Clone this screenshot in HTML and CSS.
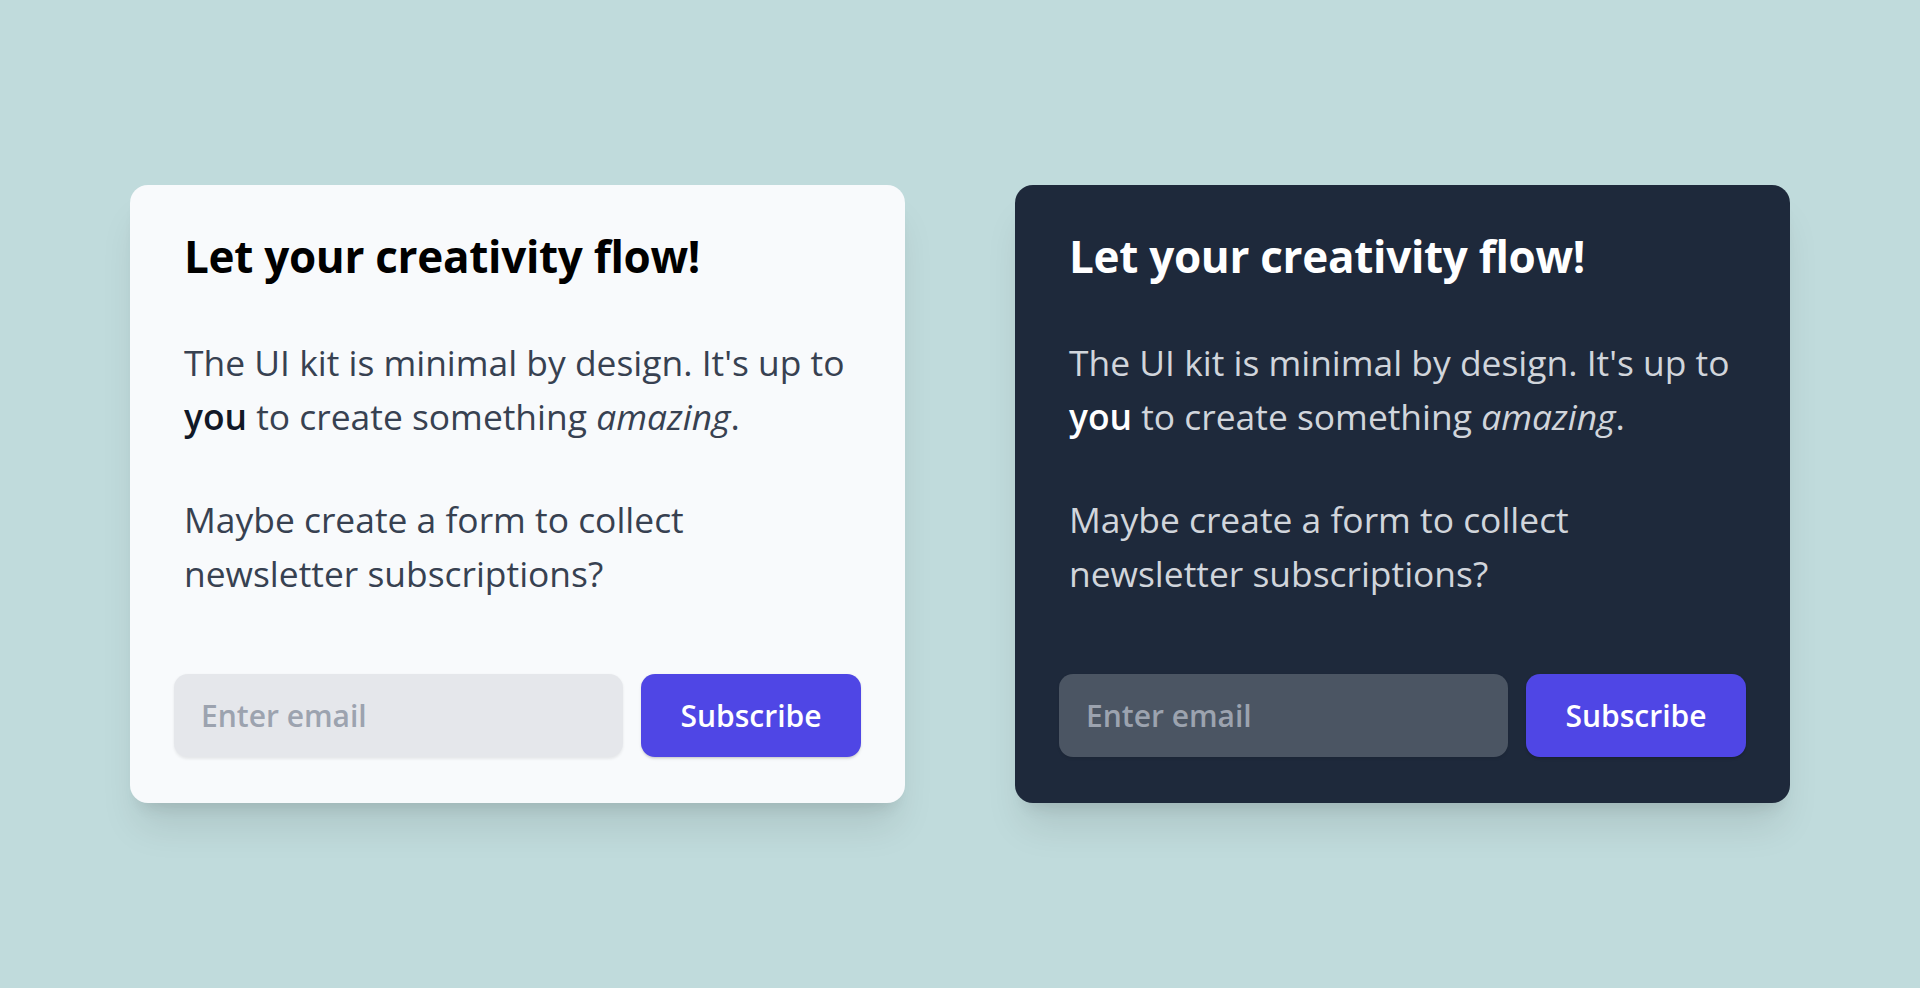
FILE: index.html
```html
<!DOCTYPE html>
<html lang="en">
<head>
<meta charset="utf-8">
<title>Let your creativity flow!</title>
<link rel="stylesheet" href="styles.css">
</head>
<body>
<main class="stage">
  <section class="card card--light">
    <div class="copy">
      <h2 class="title">Let your creativity flow!</h2>
      <p class="text">The UI kit is minimal by design. It's up to <strong>you</strong> to create something <em>amazing</em>.</p>
      <p class="text">Maybe create a form to collect<br>newsletter subscriptions?</p>
    </div>
    <form class="form">
      <input class="field" type="email" placeholder="Enter email">
      <button class="btn" type="button">Subscribe</button>
    </form>
  </section>
  <section class="card card--dark">
    <div class="copy">
      <h2 class="title">Let your creativity flow!</h2>
      <p class="text">The UI kit is minimal by design. It's up to <strong>you</strong> to create something <em>amazing</em>.</p>
      <p class="text">Maybe create a form to collect<br>newsletter subscriptions?</p>
    </div>
    <form class="form">
      <input class="field" type="email" placeholder="Enter email">
      <button class="btn" type="button">Subscribe</button>
    </form>
  </section>
</main>
</body>
</html>
```

FILE: styles.css
```css
* { box-sizing: border-box; }
html, body { margin: 0; padding: 0; }
body {
  background: #c0dbdc;
  font-family: "Open Sans", "Noto Sans", sans-serif;
  min-height: 988px;
}
.stage {
  min-height: 988px;
  display: flex;
  align-items: center;
  justify-content: center;
  gap: 110px;
}
.card {
  width: 775px;
  border-radius: 18px;
  padding: 44px 44px 46px;
  box-shadow: 0 30px 38px -8px rgba(0,0,0,0.1), 0 12px 15px -9px rgba(0,0,0,0.1);
}
.card--light { background: #f8fafc; }
.card--dark { background: #1e293b; }
.copy { padding: 0 9px 0 10px; }
.title {
  margin: 0 0 52px;
  font-size: 44px;
  line-height: 54px;
  font-weight: 700;
  letter-spacing: -0.3px;
}
.card--light .title { color: #000; }
.card--dark .title { color: #fff; }
.text {
  margin: 0 0 49px;
  font-size: 35.4px;
  line-height: 54px;
  font-weight: 400;
}
.text:last-child { margin-bottom: 0; }
.card--light .text { color: #374151; }
.card--dark .text { color: #d1d5db; }
.text strong { font-weight: 600; }
.card--light .text strong { color: #111827; }
.card--dark .text strong { color: #fff; }
.form {
  display: flex;
  gap: 18px;
  margin-top: 74px;
}
.field {
  flex: 1;
  min-width: 0;
  height: 83px;
  border: 0;
  border-radius: 14px;
  padding: 0 27px;
  font-family: inherit;
  font-size: 30px;
  font-weight: 600;
  outline: none;
  box-shadow: 0 1.5px 3px rgba(0,0,0,0.08);
}
.card--light .field { background: #e5e7eb; color: #111827; }
.card--dark .field { background: #4b5563; color: #fff; }
.field::placeholder { color: #9ca3af; opacity: 1; }
.btn {
  height: 83px;
  width: 220px;
  border: 0;
  border-radius: 14px;
  background: #4f46e5;
  color: #fff;
  font-family: inherit;
  font-size: 30px;
  font-weight: 600;
  box-shadow: 0 1.5px 3px rgba(0,0,0,0.1), 0 1.5px 2px -1px rgba(0,0,0,0.1);
}
```
